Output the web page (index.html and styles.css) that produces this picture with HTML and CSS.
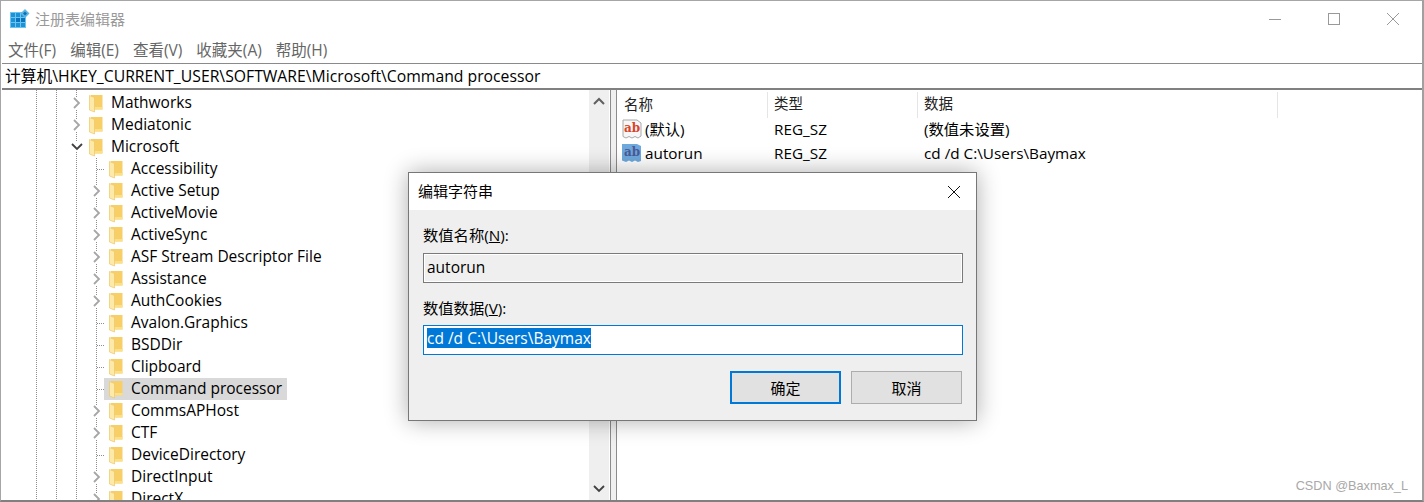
FILE: index.html
```html
<!DOCTYPE html>
<html lang="zh-CN">
<head>
  <meta charset="UTF-8" />
  <title>注册表编辑器</title>
  <link rel="stylesheet" href="styles.css">
</head>
<body>
  <svg class="defs" width="0" height="0">
    <symbol id="folder" viewBox="0 0 14 22">
      <path d="M2 3h11.500v14.500H2z" fill="#f7cf66"/>
      <path d="M5 15h8.500v2.500H5z" fill="#fbe08c"/>
      <path d="M0.500 3.500l5 2V20l-5-2z" fill="#fdeaa9" stroke="#ecc768" stroke-width="0.7"/>
    </symbol>
    <symbol id="chev-right" viewBox="0 0 10 12">
      <path d="M2 1l5 5-5 5" fill="none" stroke="#a6a6a6" stroke-width="1.8"/>
    </symbol>
    <symbol id="chev-down" viewBox="0 0 12 10">
      <path d="M1 2l5 5 5-5" fill="none" stroke="#404040" stroke-width="1.8"/>
    </symbol>
    <symbol id="chev-up" viewBox="0 0 12 10">
      <path d="M1 7l5-5 5 5" fill="none" stroke="#606060" stroke-width="2"/>
    </symbol>
  </svg>

  <div class="window">
    <header class="titlebar">
      <svg class="app-icon" width="20" height="20" viewBox="0 0 20 20">
        <rect x="0" y="3" width="16" height="16" fill="#1c93d8"/>
        <path d="M5 8h5v5H5zM10 8h5v5h-5z" fill="#0b74bd"/>
        <path d="M0.500 3v16M5.500 3v16M10.500 3v16M15.500 3v16M0 3.500h16M0 8.500h16M0 13.500h16M0 18.500h16" stroke="#6cc3ee" stroke-width="1"/>
        <path d="M15 0l4.500 4.500L15 9l-4.500-4.500z" fill="#5cb4e4"/>
        <path d="M15 2.500l2 2-2 2-2-2z" fill="#0f6fb4"/>
      </svg>
      <span class="title">注册表编辑器</span>
      <div class="win-controls">
        <svg width="14" height="14" viewBox="0 0 14 14"><path d="M1 7.500h12" stroke="#999"/></svg>
        <svg width="14" height="14" viewBox="0 0 14 14"><rect x="1.500" y="1.500" width="11" height="11" fill="none" stroke="#999"/></svg>
        <svg width="14" height="14" viewBox="0 0 14 14"><path d="M1 1l12 12M13 1L1 13" stroke="#999"/></svg>
      </div>
    </header>

    <nav class="menu">
      <span>文件(F)</span>
      <span>编辑(E)</span>
      <span>查看(V)</span>
      <span>收藏夹(A)</span>
      <span>帮助(H)</span>
    </nav>

    <div class="address">计算机\HKEY_CURRENT_USER\SOFTWARE\Microsoft\Command processor</div>

    <main class="panes">
      <section class="tree-pane">
        <div class="tree">
          <div class="node lvl1"><svg class="chev"><use href="#chev-right"/></svg><svg class="folder"><use href="#folder"/></svg><span class="name">Mathworks</span></div>
          <div class="node lvl1"><svg class="chev"><use href="#chev-right"/></svg><svg class="folder"><use href="#folder"/></svg><span class="name">Mediatonic</span></div>
          <div class="node lvl1"><svg class="chev open"><use href="#chev-down"/></svg><svg class="folder"><use href="#folder"/></svg><span class="name">Microsoft</span></div>
          <div class="node lvl2 leaf"><svg class="folder"><use href="#folder"/></svg><span class="name">Accessibility</span></div>
          <div class="node lvl2"><svg class="chev"><use href="#chev-right"/></svg><svg class="folder"><use href="#folder"/></svg><span class="name">Active Setup</span></div>
          <div class="node lvl2"><svg class="chev"><use href="#chev-right"/></svg><svg class="folder"><use href="#folder"/></svg><span class="name">ActiveMovie</span></div>
          <div class="node lvl2"><svg class="chev"><use href="#chev-right"/></svg><svg class="folder"><use href="#folder"/></svg><span class="name">ActiveSync</span></div>
          <div class="node lvl2"><svg class="chev"><use href="#chev-right"/></svg><svg class="folder"><use href="#folder"/></svg><span class="name">ASF Stream Descriptor File</span></div>
          <div class="node lvl2"><svg class="chev"><use href="#chev-right"/></svg><svg class="folder"><use href="#folder"/></svg><span class="name">Assistance</span></div>
          <div class="node lvl2"><svg class="chev"><use href="#chev-right"/></svg><svg class="folder"><use href="#folder"/></svg><span class="name">AuthCookies</span></div>
          <div class="node lvl2 leaf"><svg class="folder"><use href="#folder"/></svg><span class="name">Avalon.Graphics</span></div>
          <div class="node lvl2 leaf"><svg class="folder"><use href="#folder"/></svg><span class="name">BSDDir</span></div>
          <div class="node lvl2 leaf"><svg class="folder"><use href="#folder"/></svg><span class="name">Clipboard</span></div>
          <div class="node lvl2 leaf selected"><svg class="folder"><use href="#folder"/></svg><span class="name">Command processor</span></div>
          <div class="node lvl2"><svg class="chev"><use href="#chev-right"/></svg><svg class="folder"><use href="#folder"/></svg><span class="name">CommsAPHost</span></div>
          <div class="node lvl2"><svg class="chev"><use href="#chev-right"/></svg><svg class="folder"><use href="#folder"/></svg><span class="name">CTF</span></div>
          <div class="node lvl2 leaf"><svg class="folder"><use href="#folder"/></svg><span class="name">DeviceDirectory</span></div>
          <div class="node lvl2"><svg class="chev"><use href="#chev-right"/></svg><svg class="folder"><use href="#folder"/></svg><span class="name">DirectInput</span></div>
          <div class="node lvl2"><svg class="chev"><use href="#chev-right"/></svg><svg class="folder"><use href="#folder"/></svg><span class="name">DirectX</span></div>
        </div>
        <div class="scrollbar">
          <svg width="12" height="10"><use href="#chev-up"/></svg>
          <svg width="12" height="10"><use href="#chev-down"/></svg>
        </div>
      </section>

      <div class="splitter"></div>

      <section class="list-pane">
        <div class="list-head">
          <span class="col-name">名称</span>
          <span class="col-type">类型</span>
          <span class="col-data">数据</span>
        </div>
        <div class="list-row">
          <span class="col-name">
            <svg class="reg-icon" width="20" height="22" viewBox="0 0 20 22">
              <path d="M1 2h14l4 3v13l-3 2-3-1.500-3 1.500-3-1.500-3 1.500-3-1.500z" fill="#f7f7f7" stroke="#a8a8a8"/>
              <text x="2" y="14" class="ab red">ab</text>
            </svg>
            (默认)
          </span>
          <span class="col-type">REG_SZ</span>
          <span class="col-data">(数值未设置)</span>
        </div>
        <div class="list-row">
          <span class="col-name">
            <svg class="reg-icon" width="20" height="22" viewBox="0 0 20 22">
              <path d="M0 2h15l4 2v15l-3 1-3-1.500-3 1.500-3-1.500-3 1.500-4-1.500z" fill="#6ea8dc"/>
              <text x="2" y="14" class="ab blue">ab</text>
            </svg>
            autorun
          </span>
          <span class="col-type">REG_SZ</span>
          <span class="col-data">cd /d C:\Users\Baymax</span>
        </div>
      </section>
    </main>
  </div>

  <div class="dialog">
    <div class="dialog-title">
      <span>编辑字符串</span>
      <svg width="14" height="14" viewBox="0 0 14 14"><path d="M1 1l12 12M13 1L1 13" stroke="#111"/></svg>
    </div>
    <div class="dialog-body">
      <div class="field-label">数值名称(<u>N</u>):</div>
      <div class="value-box readonly">autorun</div>
      <div class="field-label second">数值数据(<u>V</u>):</div>
      <div class="value-box focused"><span class="sel">cd /d C:\Users\Baymax</span></div>
      <div class="dialog-buttons">
        <button class="btn default">确定</button>
        <button class="btn">取消</button>
      </div>
    </div>
  </div>

  <div class="watermark">CSDN @Baxmax_L</div>
</body>
</html>
```

FILE: styles.css
```css
* {
  margin: 0;
  padding: 0;
  box-sizing: border-box;
  font-family: 'Open Sans', 'Noto Sans CJK SC', sans-serif;
}

body {
  width: 1424px;
  height: 502px;
  overflow: hidden;
  background-color: #ffffff;
  color: #000;
  font-size: 15.5px;
}

.defs {
  position: absolute;
}

.window {
  height: 502px;
  display: flex;
  flex-direction: column;
  border-top: 1px solid #a6a6a6;
  border-left: 1px solid #a6a6a6;
  border-right: 2px solid #a0a0a0;
  border-bottom: 2px solid #808080;
}

/* title bar */
.titlebar {
  height: 38px;
  display: flex;
  align-items: center;
  padding-left: 9px;
  padding-bottom: 3px;
  flex-shrink: 0;
}

.app-icon {
  margin-right: 5px;
}

.title {
  color: #999;
  font-size: 15px;
}

.win-controls {
  margin-left: auto;
  display: flex;
  gap: 45px;
  padding-right: 22px;
}

/* menu */
.menu {
  height: 24px;
  display: flex;
  align-items: center;
  gap: 14px;
  padding-left: 7px;
  padding-bottom: 3px;
  font-size: 15.5px;
  color: #666;
  flex-shrink: 0;
}

.address {
  height: 27px;
  line-height: 24px;
  padding-left: 3px;
  margin-left: 1px;
  border-top: 1px solid #8a8a8a;
  border-bottom: 2px solid #808080;
  flex-shrink: 0;
  white-space: nowrap;
  font-size: 15.75px;
}

/* panes */
.panes {
  flex: 1;
  display: flex;
  min-height: 0;
}

.tree-pane {
  width: 608px;
  display: flex;
  margin-left: 1px;
  flex-shrink: 0;
}

.tree {
  flex: 1;
  padding-top: 2px;
  overflow: hidden;
  background-image:
    repeating-linear-gradient(to bottom, #8c8c8c 0 1px, transparent 1px 2px),
    repeating-linear-gradient(to bottom, #8c8c8c 0 1px, transparent 1px 2px),
    repeating-linear-gradient(to bottom, #8c8c8c 0 1px, transparent 1px 2px);
  background-size: 1px 100%;
  background-repeat: no-repeat;
  background-position: 34px 0, 54px 0, 74px 0;
}

.node {
  height: 22px;
  display: flex;
  align-items: center;
  position: relative;
  white-space: nowrap;
  line-height: 22px;
}

.name {
  padding-bottom: 2px;
}

.lvl1 {
  padding-left: 70px;
}

.lvl2 {
  padding-left: 90px;
  background-image: repeating-linear-gradient(to bottom, #8c8c8c 0 1px, transparent 1px 2px);
  background-size: 1px 100%;
  background-repeat: no-repeat;
  background-position: 94px 0;
}

.chev {
  width: 10px;
  height: 12px;
  margin-right: 7px;
  background-color: #fff;
  flex-shrink: 0;
}

.chev.open {
  width: 12px;
  height: 10px;
  margin-left: -1px;
  margin-right: 6px;
}

.leaf::before {
  content: "";
  width: 8px;
  height: 1px;
  margin-left: 5px;
  margin-right: 4px;
  flex-shrink: 0;
  background-image: repeating-linear-gradient(to right, #8c8c8c 0 1px, transparent 1px 2px);
}

.folder {
  width: 14px;
  height: 22px;
  flex-shrink: 0;
  margin-right: 8px;
}

.selected::after {
  content: "";
  position: absolute;
  left: 102px;
  top: 0;
  width: 183px;
  height: 22px;
  background-color: #d9d9d9;
  z-index: 0;
}

.selected .folder,
.selected .name {
  position: relative;
  z-index: 1;
}

.scrollbar {
  width: 20px;
  margin-right: 1px;
  background-color: #efefef;
  display: flex;
  flex-direction: column;
  justify-content: space-between;
  align-items: center;
  padding: 7px 0 6px;
  flex-shrink: 0;
}

.splitter {
  width: 7px;
  flex-shrink: 0;
  background-color: #f0f0f0;
  border-left: 1px solid #8c8c8c;
  border-right: 1px solid #8c8c8c;
}

.list-pane {
  flex: 1;
  padding-top: 2px;
  position: relative;
}

.list-head {
  height: 26px;
  display: flex;
  align-items: center;
  font-size: 14.5px;
  color: #222;
}

.list-head span {
  height: 26px;
  line-height: 24px;
  border-right: 1px solid #e5e5e5;
}

.list-head .col-name {
  width: 151px;
}

.list-head .col-data {
  width: 360px;
}

.list-row {
  height: 24px;
  display: flex;
  align-items: center;
  white-space: nowrap;
  line-height: 20px;
  font-size: 15.3px;
  position: relative;
  top: -1px;
}

.col-name {
  width: 151px;
  padding-left: 7px;
  display: flex;
  align-items: center;
  flex-shrink: 0;
}

.list-row .col-name {
  padding-left: 5px;
}

.col-type {
  width: 150px;
  padding-left: 6px;
  flex-shrink: 0;
}

.col-data {
  padding-left: 6px;
}

.reg-icon {
  margin-right: 3px;
  flex-shrink: 0;
}

.ab {
  font-family: 'DejaVu Serif', serif;
  font-weight: bold;
  font-size: 12px;
}

.ab.red {
  fill: #d9432a;
}

.ab.blue {
  fill: #4a5a96;
}

/* dialog */
.dialog {
  position: absolute;
  left: 408px;
  top: 172px;
  width: 569px;
  height: 249px;
  border: 1px solid #777;
  background-color: #efefef;
  box-shadow: 0 0 22px rgba(0, 0, 0, 0.32);
  display: flex;
  flex-direction: column;
}

.dialog-title {
  height: 37px;
  background-color: #fff;
  display: flex;
  align-items: center;
  justify-content: space-between;
  padding: 0 15px 0 9px;
  font-size: 15px;
  flex-shrink: 0;
}

.dialog-title span {
  padding-bottom: 3px;
}

.dialog-body {
  flex: 1;
  padding: 14px 13px 0 14px;
}

.field-label {
  height: 24px;
  line-height: 23px;
  font-size: 15.3px;
  margin-bottom: 5px;
}

.field-label.second {
  margin-top: 14px;
  margin-bottom: 4px;
}

.value-box {
  height: 30px;
  line-height: 26px;
  padding-left: 3px;
  white-space: nowrap;
}

.value-box.readonly {
  border: 1px solid #7a7a7a;
  box-shadow: inset 0 0 0 1px #fff;
}

.value-box.focused {
  border: 1px solid #0078d7;
  background-color: #fff;
}

.sel {
  display: inline-block;
  height: 20px;
  line-height: 20px;
  margin-top: 2px;
  vertical-align: top;
  background-color: #0078d7;
  color: #fff;
}

.dialog-buttons {
  display: flex;
  justify-content: flex-end;
  gap: 10px;
  margin-top: 16px;
  padding-right: 1px;
}

.btn {
  width: 111px;
  height: 33px;
  background-color: #e1e1e1;
  border: 1px solid #adadad;
  font-size: 15px;
  color: #000;
}

.btn.default {
  border: 2px solid #0078d7;
}

.watermark {
  position: absolute;
  right: 16px;
  bottom: 9px;
  font-family: 'Liberation Sans', sans-serif;
  font-size: 12.7px;
  color: #a8a8a8;
}
```
